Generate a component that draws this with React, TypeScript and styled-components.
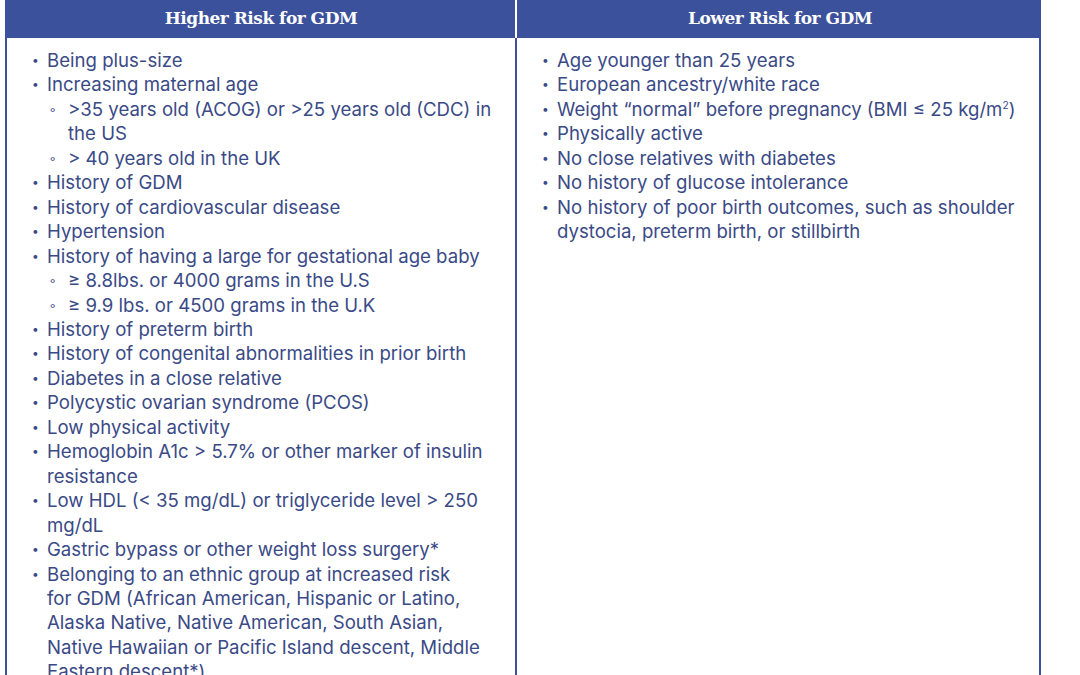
import React from 'react';
import styled, { createGlobalStyle } from 'styled-components';

const GlobalStyle = createGlobalStyle`
  html, body {
    margin: 0;
    padding: 0;
    background: #fff;
  }
`

const BLUE = '#3c519b';
const INK = '#3a4a86';

const Page = styled.div`
  padding-left: 5px;
  width: 1036px;
  height: 675px;
  overflow: hidden;
`

const Table = styled.div`
  display: grid;
  grid-template-columns: 510px 526px;
  border: 2px solid ${BLUE};
  border-top: none;
`

const HeadCell = styled.div<{ divider?: boolean }>`
  background: ${BLUE};
  color: #fff;
  height: 38px;
  padding-bottom: 3px;
  box-sizing: border-box;
  display: flex;
  align-items: center;
  justify-content: center;
  font-family: "DejaVu Serif", "Liberation Serif", serif;
  font-weight: bold;
  font-size: 17px;
  letter-spacing: -0.5px;
  border-right: ${p => (p.divider ? '2px solid #fff' : 'none')};
`

const BodyCell = styled.div<{ divider?: boolean }>`
  padding: 10px 20px 40px 0;
  border-right: ${p => (p.divider ? `2px solid ${BLUE}` : 'none')};
  min-height: 700px;
`

const List = styled.ul<{ sub?: boolean }>`
  list-style: none;
  margin: 0;
  padding: 0 0 0 ${p => (p.sub ? '0' : '25px')};
  font-family: Inter, "Liberation Sans", sans-serif;
  font-size: 18.6px;
  line-height: 24.45px;
  color: ${INK};
`

const Item = styled.li<{ sub?: boolean }>`
  display: flex;
  &::before {
    content: '${p => (p.sub ? '◦' : '•')}';
    flex: 0 0 ${p => (p.sub ? '21px' : '15px')};
    padding-left: ${p => (p.sub ? '2px' : '0')};
    box-sizing: border-box;
    font-size: ${p => (p.sub ? '13px' : '12px')};
  }
`

const ItemText = styled.div`
  flex: 1;
`

type Group = { text: string; children: string[] };
type Entry = string | string[] | Group;

const higher: Entry[] = [
  'Being plus-size',
  {
    text: 'Increasing maternal age',
    children: ['>35 years old (ACOG) or >25 years old (CDC) in the US', '> 40 years old in the UK'],
  },
  'History of GDM',
  'History of cardiovascular disease',
  'Hypertension',
  {
    text: 'History of having a large for gestational age baby',
    children: ['≥ 8.8lbs. or 4000 grams in the U.S', '≥ 9.9 lbs. or 4500 grams in the U.K'],
  },
  'History of preterm birth',
  'History of congenital abnormalities in prior birth',
  'Diabetes in a close relative',
  'Polycystic ovarian syndrome (PCOS)',
  'Low physical activity',
  'Hemoglobin A1c > 5.7% or other marker of insulin resistance',
  'Low HDL (< 35 mg/dL) or triglyceride level > 250 mg/dL',
  'Gastric bypass or other weight loss surgery*',
  [
    'Belonging to an ethnic group at increased risk',
    'for GDM (African American, Hispanic or Latino,',
    'Alaska Native, Native American, South Asian,',
    'Native Hawaiian or Pacific Island descent, Middle',
    'Eastern descent*)',
  ],
];

const Sup = styled.sup`
  font-size: 0.55em;
  line-height: 0;
`

const lower: React.ReactNode[] = [
  'Age younger than 25 years',
  'European ancestry/white race',
  <>Weight “normal” before pregnancy (BMI ≤ 25 kg/m<Sup>2</Sup>)</>,
  'Physically active',
  'No close relatives with diabetes',
  'No history of glucose intolerance',
  'No history of poor birth outcomes, such as shoulder dystocia, preterm birth, or stillbirth',
];

const Line = styled.span`
  display: block;
  white-space: nowrap;
`

const renderEntry = (e: Entry, i: number) => {
  if (typeof e === 'string') {
    return (
      <Item key={i}>
        <ItemText>{e}</ItemText>
      </Item>
    );
  }
  if (Array.isArray(e)) {
    return (
      <Item key={i}>
        <ItemText>
          {e.map((l, j) => (
            <Line key={j}>{l}</Line>
          ))}
        </ItemText>
      </Item>
    );
  }
  return (
    <Item key={i}>
      <ItemText>
        {e.text}
        <List sub>
          {e.children.map((c, j) => (
            <Item sub key={j}>
              <ItemText>{c}</ItemText>
            </Item>
          ))}
        </List>
      </ItemText>
    </Item>
  );
};

const App: React.FunctionComponent = () => (
  <Page>
    <GlobalStyle />
    <Table>
      <HeadCell divider>Higher Risk for GDM</HeadCell>
      <HeadCell>Lower Risk for GDM</HeadCell>
      <BodyCell divider>
        <List>{higher.map(renderEntry)}</List>
      </BodyCell>
      <BodyCell>
        <List>
          {lower.map((l, i) => (
            <Item key={i}>
              <ItemText>{l}</ItemText>
            </Item>
          ))}
        </List>
      </BodyCell>
    </Table>
  </Page>
);

export default App;
